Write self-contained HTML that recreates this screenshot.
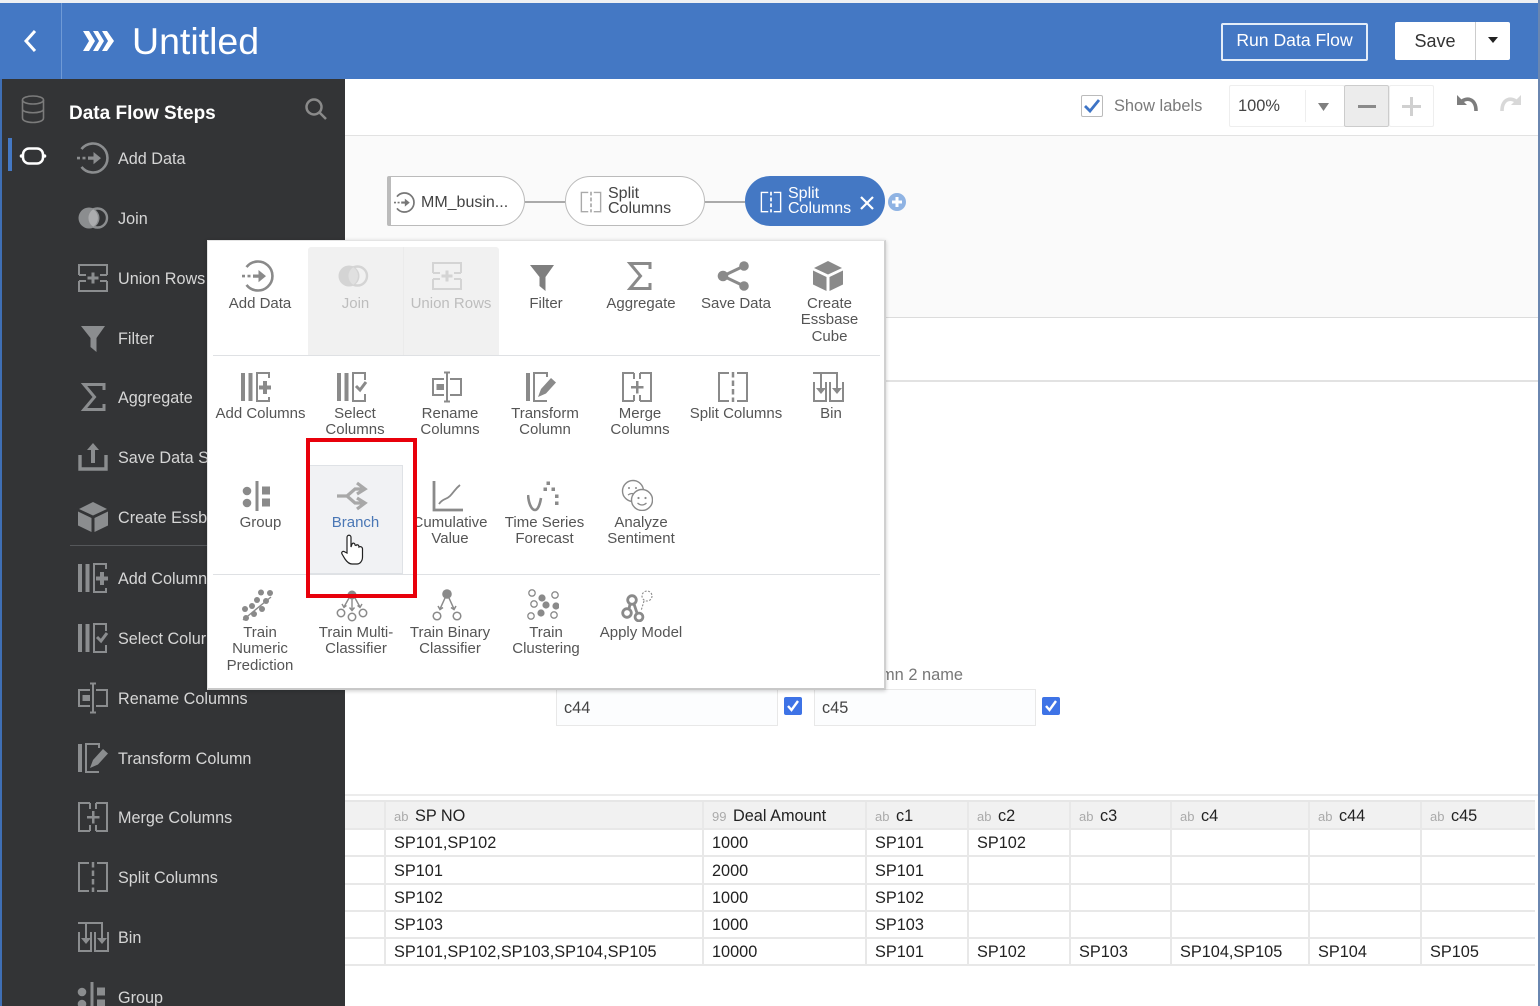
<!DOCTYPE html>
<html><head><meta charset="utf-8"><title>Untitled</title>
<style>
html,body{margin:0;padding:0;background:#fff}
#p{position:relative;width:1540px;height:1006px;overflow:hidden;background:#fff;font-family:"Liberation Sans",sans-serif}
#p div,#p svg,#p table{position:absolute}
.s{color:#d6d6d6;font-size:16.2px;left:118px;line-height:20px;white-space:nowrap;margin-top:1px}
.si{color:#8b8d8f;width:32px;height:32px;left:77px}
.m{color:#8a8a8a;width:32px;height:32px}
.l{width:130px;margin-left:-65px;margin-top:1px;text-align:center;font-size:15px;line-height:16.4px;color:#555}
.dm{color:#d4d4d4}
.ds{fill:none;stroke:currentColor;stroke-width:2}
td{padding:2px 0 0 8px;border:solid #e8e8e8;border-width:0 0 2px 2px;font-size:16.3px;color:#222;white-space:nowrap;overflow:hidden;height:23px;box-sizing:content-box}
th{padding:2px 0 0 8px;border:solid #e8e8e8;border-width:0 0 2px 2px;font-size:16.3px;font-weight:normal;color:#222;text-align:left;background:#f1f1f1;height:24px;white-space:nowrap}
th i{font-style:normal;font-size:13px;color:#aaa;margin-right:6.5px}
</style></head><body>
<div id="p">
<svg width="0" height="0" style="left:0;top:0"><defs>
<symbol id="add" viewBox="0 0 32 32"><path fill="none" stroke="currentColor" stroke-width="2.6" d="M4.500 7.100A14.500 14.500 0 1 1 4.500 24.900"/><path fill="currentColor" d="M0 14.800h3v2.600H0zM5.500 14.800h3v2.600h-3zM11 14.500h5.500V10L24 16.100 16.500 22.200V17.700H11z"/></symbol>
<symbol id="join" viewBox="0 0 32 32"><circle cx="12" cy="16" r="10.500" fill="currentColor"/><circle cx="20.500" cy="16" r="9.500" fill="none" stroke="currentColor" stroke-width="2.400"/><path d="M16.200 7.200A10.500 10.500 0 0 1 16.200 24.800A10.500 10.500 0 0 1 16.200 7.200z" fill="#fff" fill-opacity=".28"/></symbol>
<symbol id="union" viewBox="0 0 32 32"><path class="ds" stroke-width="2.200" d="M2 13V3H30V13M2 13H9M30 13H23M2 19V29H30V19M2 19H9M30 19H23"/><path fill="currentColor" d="M14.500 10.500h3v4h4v3h-4v4h-3v-4h-4v-3h4z"/></symbol>
<symbol id="filter" viewBox="0 0 32 32"><path fill="currentColor" d="M4 4H28L19.500 16V30L13.500 25V16z"/></symbol>
<symbol id="sum" viewBox="0 0 32 32"><path fill="none" stroke="currentColor" stroke-width="3" d="M27 9V3.500H7L17.500 16 7 28.500H27V23"/></symbol>
<symbol id="share" viewBox="0 0 32 32"><path fill="none" stroke="currentColor" stroke-width="3" d="M27 6L6 16L27 26"/><circle cx="27" cy="6" r="4.800" fill="currentColor"/><circle cx="6" cy="16" r="5.300" fill="currentColor"/><circle cx="27" cy="26" r="4.800" fill="currentColor"/></symbol>
<symbol id="upload" viewBox="0 0 32 32"><path fill="none" stroke="currentColor" stroke-width="3.400" d="M3 14V28H29V14"/><path fill="currentColor" d="M16 2L22 9H18V22H14V9H10z"/></symbol>
<symbol id="cube" viewBox="0 0 32 32"><path fill="currentColor" d="M16 1L30 8 16 14.500 2 8zM1 10.500L14.500 17V31L1 24.500zM31 10.500L17.500 17V31L31 24.500z"/></symbol>
<symbol id="addc" viewBox="0 0 32 32"><path fill="currentColor" d="M1 2h4v28H1zM8.500 2h4v28h-4zM23 10h4v4.500h4v4h-4V23h-4v-4.500h-4v-4h4z"/><path class="ds" stroke-width="1.800" d="M29 7V2H17V30H29V26"/></symbol>
<symbol id="selc" viewBox="0 0 32 32"><path fill="currentColor" d="M1 2h4v28H1zM8.500 2h4v28h-4z"/><path class="ds" stroke-width="1.800" d="M29 9V2H17V30H29V23"/><path fill="none" stroke="currentColor" stroke-width="3" d="M20 15l4 4 6-8"/></symbol>
<symbol id="ren" viewBox="0 0 32 32"><path class="ds" d="M13 8H2V24H13M19 8H30V24H19M13 1.500H19M16 1.500V30.500M13 30.500H19"/><path fill="currentColor" d="M5.500 13H13v6H5.500z"/></symbol>
<symbol id="trans" viewBox="0 0 32 32"><path fill="currentColor" d="M1 2h4v28H1zM13 26l3-8 10-11 5 4.500-10 11z"/><path class="ds" stroke-width="1.600" d="M22 6V2H9V30H22"/></symbol>
<symbol id="merge" viewBox="0 0 32 32"><path class="ds" stroke-width="1.800" d="M13 2H2V30H13M19 2H30V30H19M13 2V8M19 2V8M13 30V24M19 30V24"/><path fill="currentColor" d="M15 10h2.500v5h5v2.500h-5v5H15v-5h-5V15h5z"/></symbol>
<symbol id="split" viewBox="0 0 32 32"><path class="ds" stroke-width="1.800" d="M12 2H2V30H12M20 2H30V30H20"/><path fill="none" stroke="currentColor" stroke-width="2.500" stroke-dasharray="5.500 3" d="M16 1V31"/></symbol>
<symbol id="bin" viewBox="0 0 32 32"><path class="ds" stroke-width="1.800" d="M1 2H26M9 2V17M25 2V17M2 11V30H14V11M18 11V30H31V11"/><path fill="currentColor" d="M4 17H14L9 23zM20 17H30L25 23z"/></symbol>
<symbol id="group" viewBox="0 0 32 32"><circle cx="5" cy="11" r="4.300" fill="currentColor"/><circle cx="5" cy="23" r="4.300" fill="currentColor"/><path fill="currentColor" d="M13.500 1h3v30h-3zM20 6.500h8v8h-8zM20 18.500h8v8h-8z"/></symbol>
<symbol id="branch" viewBox="0 0 32 32"><path fill="none" stroke="currentColor" stroke-width="3.200" d="M1 16H11L19 9H26M11 16L19 23H26M21 3L29 9 21 14M21 18L29 23 21 29"/></symbol>
<symbol id="cum" viewBox="0 0 32 32"><path fill="none" stroke="currentColor" stroke-width="2.800" d="M3 1V30H32"/><path fill="none" stroke="currentColor" stroke-width="1.800" d="M8 24C12 18 15 20 19 16S24 9 29 5"/></symbol>
<symbol id="ts" viewBox="0 0 32 32"><path fill="none" stroke="currentColor" stroke-width="2.600" d="M1 15C2 27 6 30 8 30C11 30 13 24 14 18"/><path fill="currentColor" d="M16.500 7.500h3.500V11h-3.500zM19.500 1.500H23V5h-3.500zM24.500 7.500H28V11h-3.500zM28 14.500h3.500V18H28zM28 21.500h3.500V25H28z"/></symbol>
<symbol id="sent" viewBox="0 0 32 32"><circle cx="12" cy="12" r="10.500" fill="#fff" stroke="currentColor" stroke-width="1.400"/><circle cx="8" cy="9" r="1" fill="currentColor"/><circle cx="15" cy="9" r="1" fill="currentColor"/><path fill="none" stroke="currentColor" stroke-width="1.200" d="M7 16q4-3 8 0"/><circle cx="21" cy="21" r="10.500" fill="#fff" stroke="currentColor" stroke-width="1.400"/><circle cx="17.500" cy="19" r="1.100" fill="currentColor"/><circle cx="24.500" cy="19" r="1.100" fill="currentColor"/><path fill="none" stroke="currentColor" stroke-width="1.200" d="M16.500 24q4.500 4 9 0"/></symbol>
<symbol id="num" viewBox="0 0 32 32"><g fill="currentColor"><circle cx="5" cy="29" r="3"/><circle cx="13" cy="25" r="3"/><circle cx="4" cy="20" r="3"/><circle cx="11" cy="17" r="3"/><circle cx="21" cy="20" r="3"/><circle cx="16" cy="11" r="3"/><circle cx="25" cy="12" r="3"/><circle cx="20" cy="3.500" r="3"/><circle cx="29" cy="4" r="3"/></g><path fill="none" stroke="currentColor" stroke-width="1.400" d="M2 31L30 8"/></symbol>
<symbol id="multi" viewBox="0 0 32 32"><circle cx="16" cy="5" r="4.500" fill="currentColor"/><path fill="none" stroke="currentColor" stroke-width="1.400" d="M16 8V20M13 8L8 17M19 8L24 17M6 14l2 3.500 2.500-2M26 14l-2 3.500-2.500-2M13.500 17.500l2.500 3 2.500-3"/><g fill="none" stroke="currentColor" stroke-width="1.500"><circle cx="5" cy="23" r="3.700"/><circle cx="16" cy="27" r="3.700"/><circle cx="27" cy="23" r="3.700"/></g></symbol>
<symbol id="binary" viewBox="0 0 32 32"><circle cx="16" cy="5" r="4.800" fill="currentColor"/><path fill="none" stroke="currentColor" stroke-width="1.500" d="M14 9L9 20M18 9L23 20M7 17l2 3.500 3-2M25 17l-2 3.500-3-2"/><g fill="none" stroke="currentColor" stroke-width="1.500"><circle cx="6" cy="27" r="3.800"/><circle cx="26" cy="27" r="3.800"/></g></symbol>
<symbol id="clus" viewBox="0 0 32 32"><g fill="none" stroke="currentColor" stroke-width="1.300"><circle cx="5" cy="4" r="3.200"/><circle cx="28" cy="6" r="3.200"/><circle cx="7" cy="15" r="3.200"/><circle cx="4" cy="27" r="3.200"/><circle cx="27" cy="26" r="3.200"/></g><g fill="currentColor"><circle cx="15" cy="9" r="3.600"/><circle cx="19" cy="16" r="3.600"/><circle cx="29" cy="17" r="3.600"/><circle cx="14" cy="24" r="3.600"/></g></symbol>
<symbol id="apply" viewBox="0 0 32 32"><g fill="none" stroke="currentColor" stroke-width="2.800"><circle cx="11" cy="10" r="4.300"/><circle cx="6" cy="23" r="4.300"/><circle cx="18" cy="27" r="3.900"/><path d="M9 14L8 19M13 14L16 23"/></g><g fill="none" stroke="currentColor" stroke-width="1.100" stroke-dasharray="2 1.500"><circle cx="26" cy="6" r="5"/><path d="M23 11L20 21"/></g></symbol>
</defs></svg>

<!-- frame -->
<div style="left:0;top:0;width:1540px;height:3px;background:#eef0f3"></div>
<div style="left:0;top:3px;width:1538px;height:76px;background:#4478c4"></div>
<div style="left:61px;top:3px;width:1px;height:76px;background:#6f9ad6"></div>
<svg style="left:20px;top:28px" width="22" height="26"><path fill="none" stroke="#fff" stroke-width="3" d="M15 3L6 13 15 23"/></svg>
<svg style="left:82px;top:29px" width="34" height="24"><path fill="#fff" d="M1 2h6l6 10-6 10H1l6-10zM11 2h5l6 10-6 10h-5l6-10zM20 2h5l7 10-7 10h-5l6-10z"/></svg>
<div style="left:132px;top:18px;font-size:37.5px;line-height:46px;color:#fff">Untitled</div>
<div style="left:1221px;top:23px;width:147px;height:38px;box-sizing:border-box;border:2px solid #e4edf8;border-radius:2px;color:#fff;font-size:17.6px;line-height:30px;text-align:center">Run Data Flow</div>
<div style="left:1395px;top:22px;width:115px;height:38px;background:#fff;border-radius:2px"></div>
<div style="left:1475px;top:22px;width:1px;height:38px;background:#ccc"></div>
<div style="left:1395px;top:22px;width:80px;text-align:center;color:#333;font-size:18px;line-height:38px">Save</div>
<svg style="left:1487px;top:36px" width="12" height="8"><path fill="#222" d="M1 1H11L6 7z"/></svg>

<!-- sidebar -->
<div style="left:0;top:79px;width:2px;height:927px;background:#3f6fb5"></div>
<div style="left:2px;top:79px;width:343px;height:927px;background:#333436"></div>
<svg style="left:21px;top:94px" width="24" height="30" fill="none" stroke="#7b7b7b" stroke-width="1.600"><ellipse cx="12" cy="6" rx="10.500" ry="4"/><path d="M1.500 6V24C1.500 30 22.500 30 22.500 24V6M1.500 15C1.500 20 22.500 20 22.500 15"/></svg>
<div style="left:8px;top:138px;width:4px;height:33px;background:#4478c4"></div>
<svg style="left:18px;top:145px" width="30" height="22"><rect x="5" y="3.500" width="20" height="15" rx="6" fill="none" stroke="#fff" stroke-width="2.500"/><circle cx="3.500" cy="11" r="1.800" fill="#fff"/><circle cx="26.500" cy="11" r="1.800" fill="#fff"/></svg>
<div style="left:69px;top:102px;font-size:19px;font-weight:bold;color:#fff;line-height:24px;white-space:nowrap">Data Flow Steps</div>
<svg style="left:304px;top:97px" width="24" height="24" fill="none" stroke="#8a8a8a" stroke-width="2.500"><circle cx="10" cy="10" r="7.500"/><path d="M15.500 15.500L22 22"/></svg>

<svg class="si" style="top:142px"><use href="#add"/></svg><div class="s" style="top:148px">Add Data</div>
<svg class="si" style="top:202px"><use href="#join"/></svg><div class="s" style="top:208px">Join</div>
<svg class="si" style="top:262px"><use href="#union"/></svg><div class="s" style="top:268px">Union Rows</div>
<svg class="si" style="top:322px"><use href="#filter"/></svg><div class="s" style="top:328px">Filter</div>
<svg class="si" style="top:381px"><use href="#sum"/></svg><div class="s" style="top:387px">Aggregate</div>
<svg class="si" style="top:441px"><use href="#upload"/></svg><div class="s" style="top:447px">Save Data S</div>
<svg class="si" style="top:501px"><use href="#cube"/></svg><div class="s" style="top:507px">Create Essb</div>
<div style="left:70px;top:545px;width:275px;height:1px;background:#55575a"></div>
<svg class="si" style="top:562px"><use href="#addc"/></svg><div class="s" style="top:568px">Add Column</div>
<svg class="si" style="top:622px"><use href="#selc"/></svg><div class="s" style="top:628px">Select Colur</div>
<svg class="si" style="top:682px"><use href="#ren"/></svg><div class="s" style="top:688px">Rename Columns</div>
<svg class="si" style="top:742px"><use href="#trans"/></svg><div class="s" style="top:748px">Transform Column</div>
<svg class="si" style="top:801px"><use href="#merge"/></svg><div class="s" style="top:807px">Merge Columns</div>
<svg class="si" style="top:861px"><use href="#split"/></svg><div class="s" style="top:867px">Split Columns</div>
<svg class="si" style="top:921px"><use href="#bin"/></svg><div class="s" style="top:927px">Bin</div>
<svg class="si" style="top:981px"><use href="#group"/></svg><div class="s" style="top:987px">Group</div>

<!-- toolbar -->
<div style="left:345px;top:135px;width:1193px;height:1px;background:#e2e2e2"></div>
<div style="left:1081px;top:95px;width:22px;height:22px;box-sizing:border-box;border:1.500px solid #bbb;border-radius:2px"></div>
<svg style="left:1083px;top:97px" width="18" height="18"><path fill="none" stroke="#3d74c6" stroke-width="2.800" d="M2 9L7 14 16 3"/></svg>
<div style="left:1114px;top:96px;color:#7a7a7a;font-size:16.4px;line-height:20px;white-space:nowrap">Show labels</div>
<div style="left:1229px;top:85px;width:116px;height:42px;box-sizing:border-box;border:1px solid #eee;border-radius:2px"></div>
<div style="left:1238px;top:96px;color:#444;font-size:16.4px;line-height:20px">100%</div>
<div style="left:1305px;top:90px;width:1px;height:32px;background:#eee"></div>
<svg style="left:1317px;top:102px" width="13" height="10"><path fill="#7f7f7f" d="M1 1H12L6.500 9z"/></svg>
<div style="left:1344px;top:85px;width:45px;height:42px;box-sizing:border-box;background:#ececec;border:1px solid #ccc;border-radius:2px"></div>
<div style="left:1358px;top:105px;width:18px;height:3px;background:#8a8a8a"></div>
<div style="left:1389px;top:85px;width:45px;height:42px;box-sizing:border-box;border:1px solid #eee;border-radius:2px"></div>
<svg style="left:1402px;top:97px" width="19" height="19"><path fill="#d0d0d0" d="M8 0h3v8h8v3h-8v8H8v-8H0V8h8z"/></svg>
<svg style="left:1456px;top:94px" width="24" height="20"><path fill="#7d7d7d" d="M1 1V11H11z"/><path fill="none" stroke="#7d7d7d" stroke-width="3.600" d="M5 8C10 3 20 4 20 17"/></svg>
<svg style="left:1498px;top:94px" width="24" height="20"><path fill="#d8d8d8" d="M23 1V11H13z"/><path fill="none" stroke="#d8d8d8" stroke-width="3.600" d="M19 8C14 3 4 4 4 17"/></svg>

<!-- flow canvas -->
<div style="left:345px;top:136px;width:1193px;height:182px;background:#fafafa"></div>
<div style="left:345px;top:317px;width:1193px;height:1px;background:#dcdcdc"></div>
<div style="left:345px;top:380px;width:1193px;height:1.500px;background:#e2e2e2"></div>
<div style="left:525px;top:201px;width:40px;height:1.500px;background:#aaa"></div>
<div style="left:705px;top:201px;width:40px;height:1.500px;background:#aaa"></div>
<div style="left:387px;top:176px;width:138px;height:50px;box-sizing:border-box;background:#fff;border:1.500px solid #bbb;border-left:4px solid #bbb;border-radius:2px 25px 25px 2px"></div>
<svg style="left:394px;top:192px;color:#777" width="21" height="21"><use href="#add"/></svg>
<div style="left:421px;top:193px;color:#444;font-size:16px;line-height:20px">MM_busin...</div>
<div style="left:565px;top:176px;width:140px;height:50px;box-sizing:border-box;background:#fff;border:1.500px solid #bbb;border-radius:25px"></div>
<svg style="left:580px;top:191px;color:#aaa" width="22" height="22"><use href="#split"/></svg>
<div style="left:608px;top:186px;color:#444;font-size:16px;line-height:15px">Split<br>Columns</div>
<div style="left:745px;top:176px;width:140px;height:50px;background:#4478c4;border-radius:25px"></div>
<svg style="left:760px;top:191px;color:#fff" width="22" height="22"><use href="#split"/></svg>
<div style="left:788px;top:186px;color:#fff;font-size:16px;line-height:15px">Split<br>Columns</div>
<svg style="left:859px;top:195px" width="16" height="16"><path fill="none" stroke="#fff" stroke-width="2.200" d="M2 2L14 14M14 2L2 14"/></svg>
<div style="left:888px;top:193px;width:18px;height:18px;border-radius:50%;background:#8fb3e3"></div>
<svg style="left:891px;top:196px" width="12" height="12"><path fill="#fff" d="M4.500 1h3v3.500H11v3H7.500V11h-3V7.500H1v-3h3.500z"/></svg>

<!-- form -->
<div style="left:880px;top:665px;width:83px;color:#777;font-size:16.4px;line-height:20px;text-align:right;white-space:nowrap">mn 2 name</div>
<div style="left:556px;top:689px;width:222px;height:37px;box-sizing:border-box;border:1px solid #e8e8e8;background:#fcfdfe;color:#444;font-size:16.3px;line-height:36px;padding-left:7px">c44</div>
<div style="left:784px;top:697px;width:18px;height:18px;background:#3e73e6;border-radius:2px"></div>
<svg style="left:786px;top:699px" width="14" height="14"><path fill="none" stroke="#fff" stroke-width="2.400" d="M2 7L5.500 11 12 2"/></svg>
<div style="left:814px;top:689px;width:222px;height:37px;box-sizing:border-box;border:1px solid #e8e8e8;background:#fcfdfe;color:#444;font-size:16.3px;line-height:36px;padding-left:7px">c45</div>
<div style="left:1042px;top:697px;width:18px;height:18px;background:#3e73e6;border-radius:2px"></div>
<svg style="left:1044px;top:699px" width="14" height="14"><path fill="none" stroke="#fff" stroke-width="2.400" d="M2 7L5.500 11 12 2"/></svg>

<!-- table -->
<div style="left:345px;top:794px;width:1193px;height:2px;background:#ececec"></div>
<div style="left:345px;top:800px;width:1190px;height:2px;background:#e6e6e6"></div>
<table cellspacing="0" cellpadding="0" style="left:345px;top:802px;width:1190px;table-layout:fixed;border-collapse:separate">
<colgroup><col style="width:39px"><col style="width:318px"><col style="width:163px"><col style="width:102px"><col style="width:102px"><col style="width:101px"><col style="width:138px"><col style="width:112px"><col style="width:115px"></colgroup>
<tr><th style="padding:2px 0 0;border-left:0"></th><th><i>ab</i>SP NO</th><th><i>99</i>Deal Amount</th><th><i>ab</i>c1</th><th><i>ab</i>c2</th><th><i>ab</i>c3</th><th><i>ab</i>c4</th><th><i>ab</i>c44</th><th><i>ab</i>c45</th></tr>
<tr><td style="border-left:0"></td><td>SP101,SP102</td><td>1000</td><td>SP101</td><td>SP102</td><td></td><td></td><td></td><td></td></tr>
<tr><td style="border-left:0;height:24px"></td><td>SP101</td><td>2000</td><td>SP101</td><td></td><td></td><td></td><td></td><td></td></tr>
<tr><td style="border-left:0"></td><td>SP102</td><td>1000</td><td>SP102</td><td></td><td></td><td></td><td></td><td></td></tr>
<tr><td style="border-left:0"></td><td>SP103</td><td>1000</td><td>SP103</td><td></td><td></td><td></td><td></td><td></td></tr>
<tr><td style="border-left:0"></td><td>SP101,SP102,SP103,SP104,SP105</td><td>10000</td><td>SP101</td><td>SP102</td><td>SP103</td><td>SP104,SP105</td><td>SP104</td><td>SP105</td></tr>
</table>

<!-- popup menu -->
<div style="left:207px;top:240px;width:679px;height:450px;box-sizing:border-box;background:#fff;border:1px solid #e4e4e4;border-right:2px solid #d0d0d0;border-bottom:2px solid #c8c8c8;box-shadow:0 1px 4px rgba(0,0,0,.2)"></div>
<div style="left:308px;top:247px;width:191px;height:108px;background:#f1f1f1;border-radius:3px 3px 0 0"></div>
<div style="left:403px;top:247px;width:1px;height:108px;background:#ebebeb"></div>
<div style="left:213px;top:355px;width:667px;height:1px;background:#dfe1e4"></div>
<div style="left:213px;top:574px;width:667px;height:1px;background:#dfe1e4"></div>
<div style="left:309px;top:465px;width:94px;height:109px;box-sizing:border-box;background:#f1f2f4;border:1px solid #dfe2e6"></div>

<svg class="m" style="left:242px;top:260px"><use href="#add"/></svg><div class="l" style="left:260px;top:295px">Add Data</div>
<svg class="m dm" style="left:337px;top:260px"><use href="#join"/></svg><div class="l" style="left:355.500px;top:295px;color:#bdbdbd">Join</div>
<svg class="m dm" style="left:431px;top:260px"><use href="#union"/></svg><div class="l" style="left:451px;top:295px;color:#bdbdbd">Union Rows</div>
<svg class="m" style="left:526px;top:261px;color:#7f7f7f"><use href="#filter"/></svg><div class="l" style="left:546px;top:295px">Filter</div>
<svg class="m" style="left:623px;top:260px"><use href="#sum"/></svg><div class="l" style="left:641px;top:295px">Aggregate</div>
<svg class="m" style="left:717px;top:260px"><use href="#share"/></svg><div class="l" style="left:736px;top:295px">Save Data</div>
<svg class="m" style="left:812px;top:260px"><use href="#cube"/></svg><div class="l" style="left:829.500px;top:295px">Create<br>Essbase<br>Cube</div>

<svg class="m" style="left:240px;top:371px"><use href="#addc"/></svg><div class="l" style="left:260.500px;top:405px">Add Columns</div>
<svg class="m" style="left:336px;top:371px"><use href="#selc"/></svg><div class="l" style="left:355px;top:405px">Select<br>Columns</div>
<svg class="m" style="left:431px;top:371px"><use href="#ren"/></svg><div class="l" style="left:450px;top:405px">Rename<br>Columns</div>
<svg class="m" style="left:525px;top:371px"><use href="#trans"/></svg><div class="l" style="left:545px;top:405px">Transform<br>Column</div>
<svg class="m" style="left:621px;top:371px"><use href="#merge"/></svg><div class="l" style="left:640px;top:405px">Merge<br>Columns</div>
<svg class="m" style="left:717px;top:371px"><use href="#split"/></svg><div class="l" style="left:736px;top:405px">Split Columns</div>
<svg class="m" style="left:812px;top:371px"><use href="#bin"/></svg><div class="l" style="left:831px;top:405px">Bin</div>

<svg class="m" style="left:242px;top:480px"><use href="#group"/></svg><div class="l" style="left:260.500px;top:514px">Group</div>
<svg class="m" style="left:336px;top:480px;color:#a8a8a8"><use href="#branch"/></svg><div class="l" style="left:355.500px;top:514px;color:#4a77b5">Branch</div>
<svg class="m" style="left:431px;top:480px"><use href="#cum"/></svg><div class="l" style="left:450px;top:514px">Cumulative<br>Value</div>
<svg class="m" style="left:527px;top:480px"><use href="#ts"/></svg><div class="l" style="left:544.500px;top:514px">Time Series<br>Forecast</div>
<svg class="m" style="left:621px;top:479px"><use href="#sent"/></svg><div class="l" style="left:641px;top:514px">Analyze<br>Sentiment</div>

<svg class="m" style="left:241px;top:589px"><use href="#num"/></svg><div class="l" style="left:260px;top:624px">Train<br>Numeric<br>Prediction</div>
<svg class="m" style="left:336px;top:590px"><use href="#multi"/></svg><div class="l" style="left:356px;top:624px">Train Multi-<br>Classifier</div>
<svg class="m" style="left:431px;top:589px"><use href="#binary"/></svg><div class="l" style="left:450px;top:624px">Train Binary<br>Classifier</div>
<svg class="m" style="left:527px;top:589px"><use href="#clus"/></svg><div class="l" style="left:546px;top:624px">Train<br>Clustering</div>
<svg class="m" style="left:621px;top:590px"><use href="#apply"/></svg><div class="l" style="left:641px;top:624px">Apply Model</div>

<!-- hand cursor -->
<svg style="left:340px;top:533px" width="26" height="34"><path fill="#fff" stroke="#222" stroke-width="1.200" d="M7 20V4.500C7 1.500 11 1.500 11 4.500V14L12 11C13 9.500 15 10 15 12L16 12.500C17 11 19 12 19 14 20.500 13 22.500 14 22.500 16V24C22.500 28 20 31 17 31H12C9 31 7 29 5 26L2 21C1 19 3 17.500 5 19z"/></svg>

<!-- red box -->
<div style="left:306px;top:438px;width:111px;height:160px;box-sizing:border-box;border:4px solid #e8000b"></div>

<div style="left:1538px;top:0;width:2px;height:1006px;background:#6a86b0"></div>
</div>
</body></html>
